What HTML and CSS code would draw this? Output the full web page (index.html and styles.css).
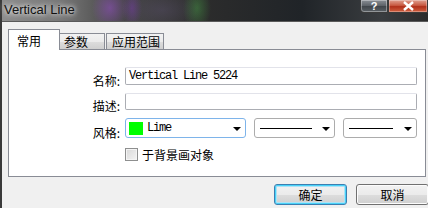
FILE: index.html
```html
<!DOCTYPE html>
<html>
<head>
<meta charset="utf-8">
<link rel="stylesheet" href="styles.css">
</head>
<body>
<div class="window">
  <div class="titlebar">
    <span class="title">Vertical Line</span>
    <div class="caption-btns">
      <div class="cbtn help">?</div>
      <div class="cbtn close">
        <svg width="13" height="10" viewBox="0 0 13 10"><path d="M2 1 L11 9 M11 1 L2 9" stroke="#fff" stroke-width="2.4" fill="none"/></svg>
      </div>
    </div>
  </div>
  <div class="client">
    <div class="tabs">
      <div class="tab active">常用</div>
      <div class="tab t2">参数</div>
      <div class="tab t3">应用范围</div>
    </div>
    <div class="panel">
      <div class="form">
        <div class="label">名称:</div>
        <div class="field f1"><div class="input mono">Vertical Line 5224</div></div>
        <div class="label">描述:</div>
        <div class="field f2"><div class="input desc"></div></div>
        <div class="label">风格:</div>
        <div class="field f3 combos">
          <div class="combo color"><span class="swatch"></span><span class="mono">Lime</span><span class="arrow"></span></div>
          <div class="combo line w1"><span class="stroke"></span><span class="arrow"></span></div>
          <div class="combo line w2"><span class="stroke"></span><span class="arrow"></span></div>
        </div>
        <div class="label"></div>
        <div class="field check"><span class="box"></span><span class="cjk">于背景画对象</span></div>
      </div>
    </div>
    <div class="buttons">
      <div class="btn default">确定</div>
      <div class="btn">取消</div>
    </div>
  </div>
</div>
</body>
</html>
```
FILE: styles.css
```css
html, body { margin: 0; padding: 0; }
body { width: 428px; height: 208px; overflow: hidden; background: #f0f0f0; }
.window {
  width: 428px; height: 208px; box-sizing: border-box;
  border-left: 2px solid #3a3a3a;
  background: #f0f0f0;
  display: flex; flex-direction: column;
  font-family: "Noto Sans CJK SC", "Liberation Sans", sans-serif;
}
.titlebar {
  height: 21px; flex: none; position: relative;
  display: flex; align-items: flex-start; justify-content: space-between;
  background:
    radial-gradient(ellipse 18px 22px at 108px 8px, rgba(150,80,200,0.55), rgba(0,0,0,0)),
    radial-gradient(ellipse 10px 20px at 130px 8px, rgba(120,60,170,0.5), rgba(0,0,0,0)),
    radial-gradient(ellipse 14px 24px at 195px 8px, rgba(70,160,70,0.45), rgba(0,0,0,0)),
    radial-gradient(ellipse 40px 20px at 160px 10px, rgba(90,80,110,0.4), rgba(0,0,0,0)),
    linear-gradient(90deg, #8d8d8d 0px, #777 60px, #4a4a4a 110px, #2c2c2c 200px, #202428 300px, #3a3d40 380px, #2a2a2a 428px);
  border-bottom: 1px solid #5a5a5a;
}
.title {
  font-family: "Liberation Sans", sans-serif; font-size: 13px; color: #111;
  margin: 2px 0 0 2px;
  text-shadow: 0 0 6px #e8e8e8, 0 0 4px #e0e0e0;
}
.caption-btns { display: flex; height: 14px; }
.cbtn {
  height: 13px; box-sizing: border-box; border: 1px solid #3a3a3a; border-top: none;
  display: flex; align-items: center; justify-content: center;
  color: #fff; font-family: "Liberation Sans", sans-serif; font-weight: bold; font-size: 11px;
}
.help {
  width: 28px; border-radius: 0 0 0 4px;
  background: linear-gradient(#8a8f95, #5b6066 50%, #40454a 51%, #5a6065);
  box-shadow: inset 0 0 0 1px rgba(255,255,255,0.35);
}
.close {
  width: 40px; border-radius: 0;
  background: linear-gradient(#e0a090, #c85a42 45%, #b0301a 55%, #d06040);
  box-shadow: inset 0 0 0 1px rgba(255,255,255,0.3);
}
.client { flex: 1; display: flex; flex-direction: column; padding: 7px 0 0 6px; }
.tabs { display: flex; align-items: flex-end; height: 20px; position: relative; z-index: 1; }
.tab {
  font-size: 12px; line-height: 15px; color: #000; white-space: nowrap;
  height: 16px; box-sizing: border-box;
  border: 1px solid #898c95; border-bottom: none;
  background: linear-gradient(#f2f2f2, #ebebeb 50%, #dddddd 51%, #cfcfcf);
  margin-left: -1px;
}
.tab.t2 { width: 46px; padding: 0 0 0 4px; }
.tab.t3 { width: 58px; padding: 0 0 0 5px; margin-left: 1px; }
.tab.active {
  height: 21px; width: 52px; margin-left: 0; margin-bottom: -1px;
  background: #fff; padding: 3px 0 0 8px; position: relative; z-index: 2;
}
.panel {
  width: 418px; height: 128px; box-sizing: border-box;
  border: 1px solid #898c95; background: #fff;
  padding: 17px 0 0 0;
}
.form {
  display: grid; grid-template-columns: 116px 292px;
}
.label {
  font-size: 12px; padding-right: 5px;
  display: flex; align-items: center; justify-content: flex-end;
  color: #000;
}
.field { display: flex; align-items: center; }
.input {
  width: 292px; height: 18px; box-sizing: border-box;
  border: 1px solid #abadb3; border-top-color: #e2e3ea; border-radius: 2px;
  padding: 0 0 0 3px; display: flex; align-items: center;
}
.f1 { height: 18px; margin-bottom: 8px; }
.f2 { height: 17px; margin-bottom: 8px; }
.f3 { height: 20px; margin-bottom: 9px; }
.input.desc { height: 17px; }
.mono {
  font-family: "Liberation Mono", monospace; font-size: 12px; letter-spacing: -1.2px; color: #000;
}
.combos { gap: 8px; }
.combo {
  height: 20px; box-sizing: border-box; position: relative;
  border: 1px solid #acacac; border-radius: 3px;
  display: flex; align-items: center; background: #fff;
}
.combo.color { width: 121px; border-color: #7eb4ea; padding-left: 3px; }
.swatch { width: 14px; height: 13px; background: #00ff00; margin-right: 4px; }
.combo.w1 { width: 81px; }
.combo.w2 { width: 74px; }
.stroke { height: 1px; background: #000; margin-left: 5px; }
.w1 .stroke { width: 52px; }
.w2 .stroke { width: 44px; }
.arrow {
  position: absolute; right: 4px; top: 8px;
  width: 0; height: 0;
  border-left: 4px solid transparent; border-right: 4px solid transparent;
  border-top: 4px solid #000;
}
.check { height: 14px; }
.box {
  width: 13px; height: 13px; box-sizing: border-box;
  border: 1px solid #8e8f8f;
  background: linear-gradient(135deg, #d8d8d8, #f4f4f4);
  box-shadow: inset 0 0 0 1px #f4f4f4;
  margin-right: 4px;
}
.cjk { font-size: 12px; color: #000; }
.buttons { display: flex; gap: 9px; padding: 7px 0 0 266px; }
.btn {
  width: 73px; height: 21px; box-sizing: border-box; flex: none;
  border: 1px solid #707070; border-radius: 3px;
  background: linear-gradient(#f2f2f2, #ebebeb 50%, #dddddd 51%, #cfcfcf);
  box-shadow: inset 0 0 0 1px #fcfcfc;
  font-size: 12px; display: flex; align-items: center; justify-content: center;
  color: #000;
}
.btn.default {
  border-color: #3c7fb1;
  box-shadow: inset 0 0 0 1px #48d2f8, inset 0 0 0 2px #aee2f6;
}
```
